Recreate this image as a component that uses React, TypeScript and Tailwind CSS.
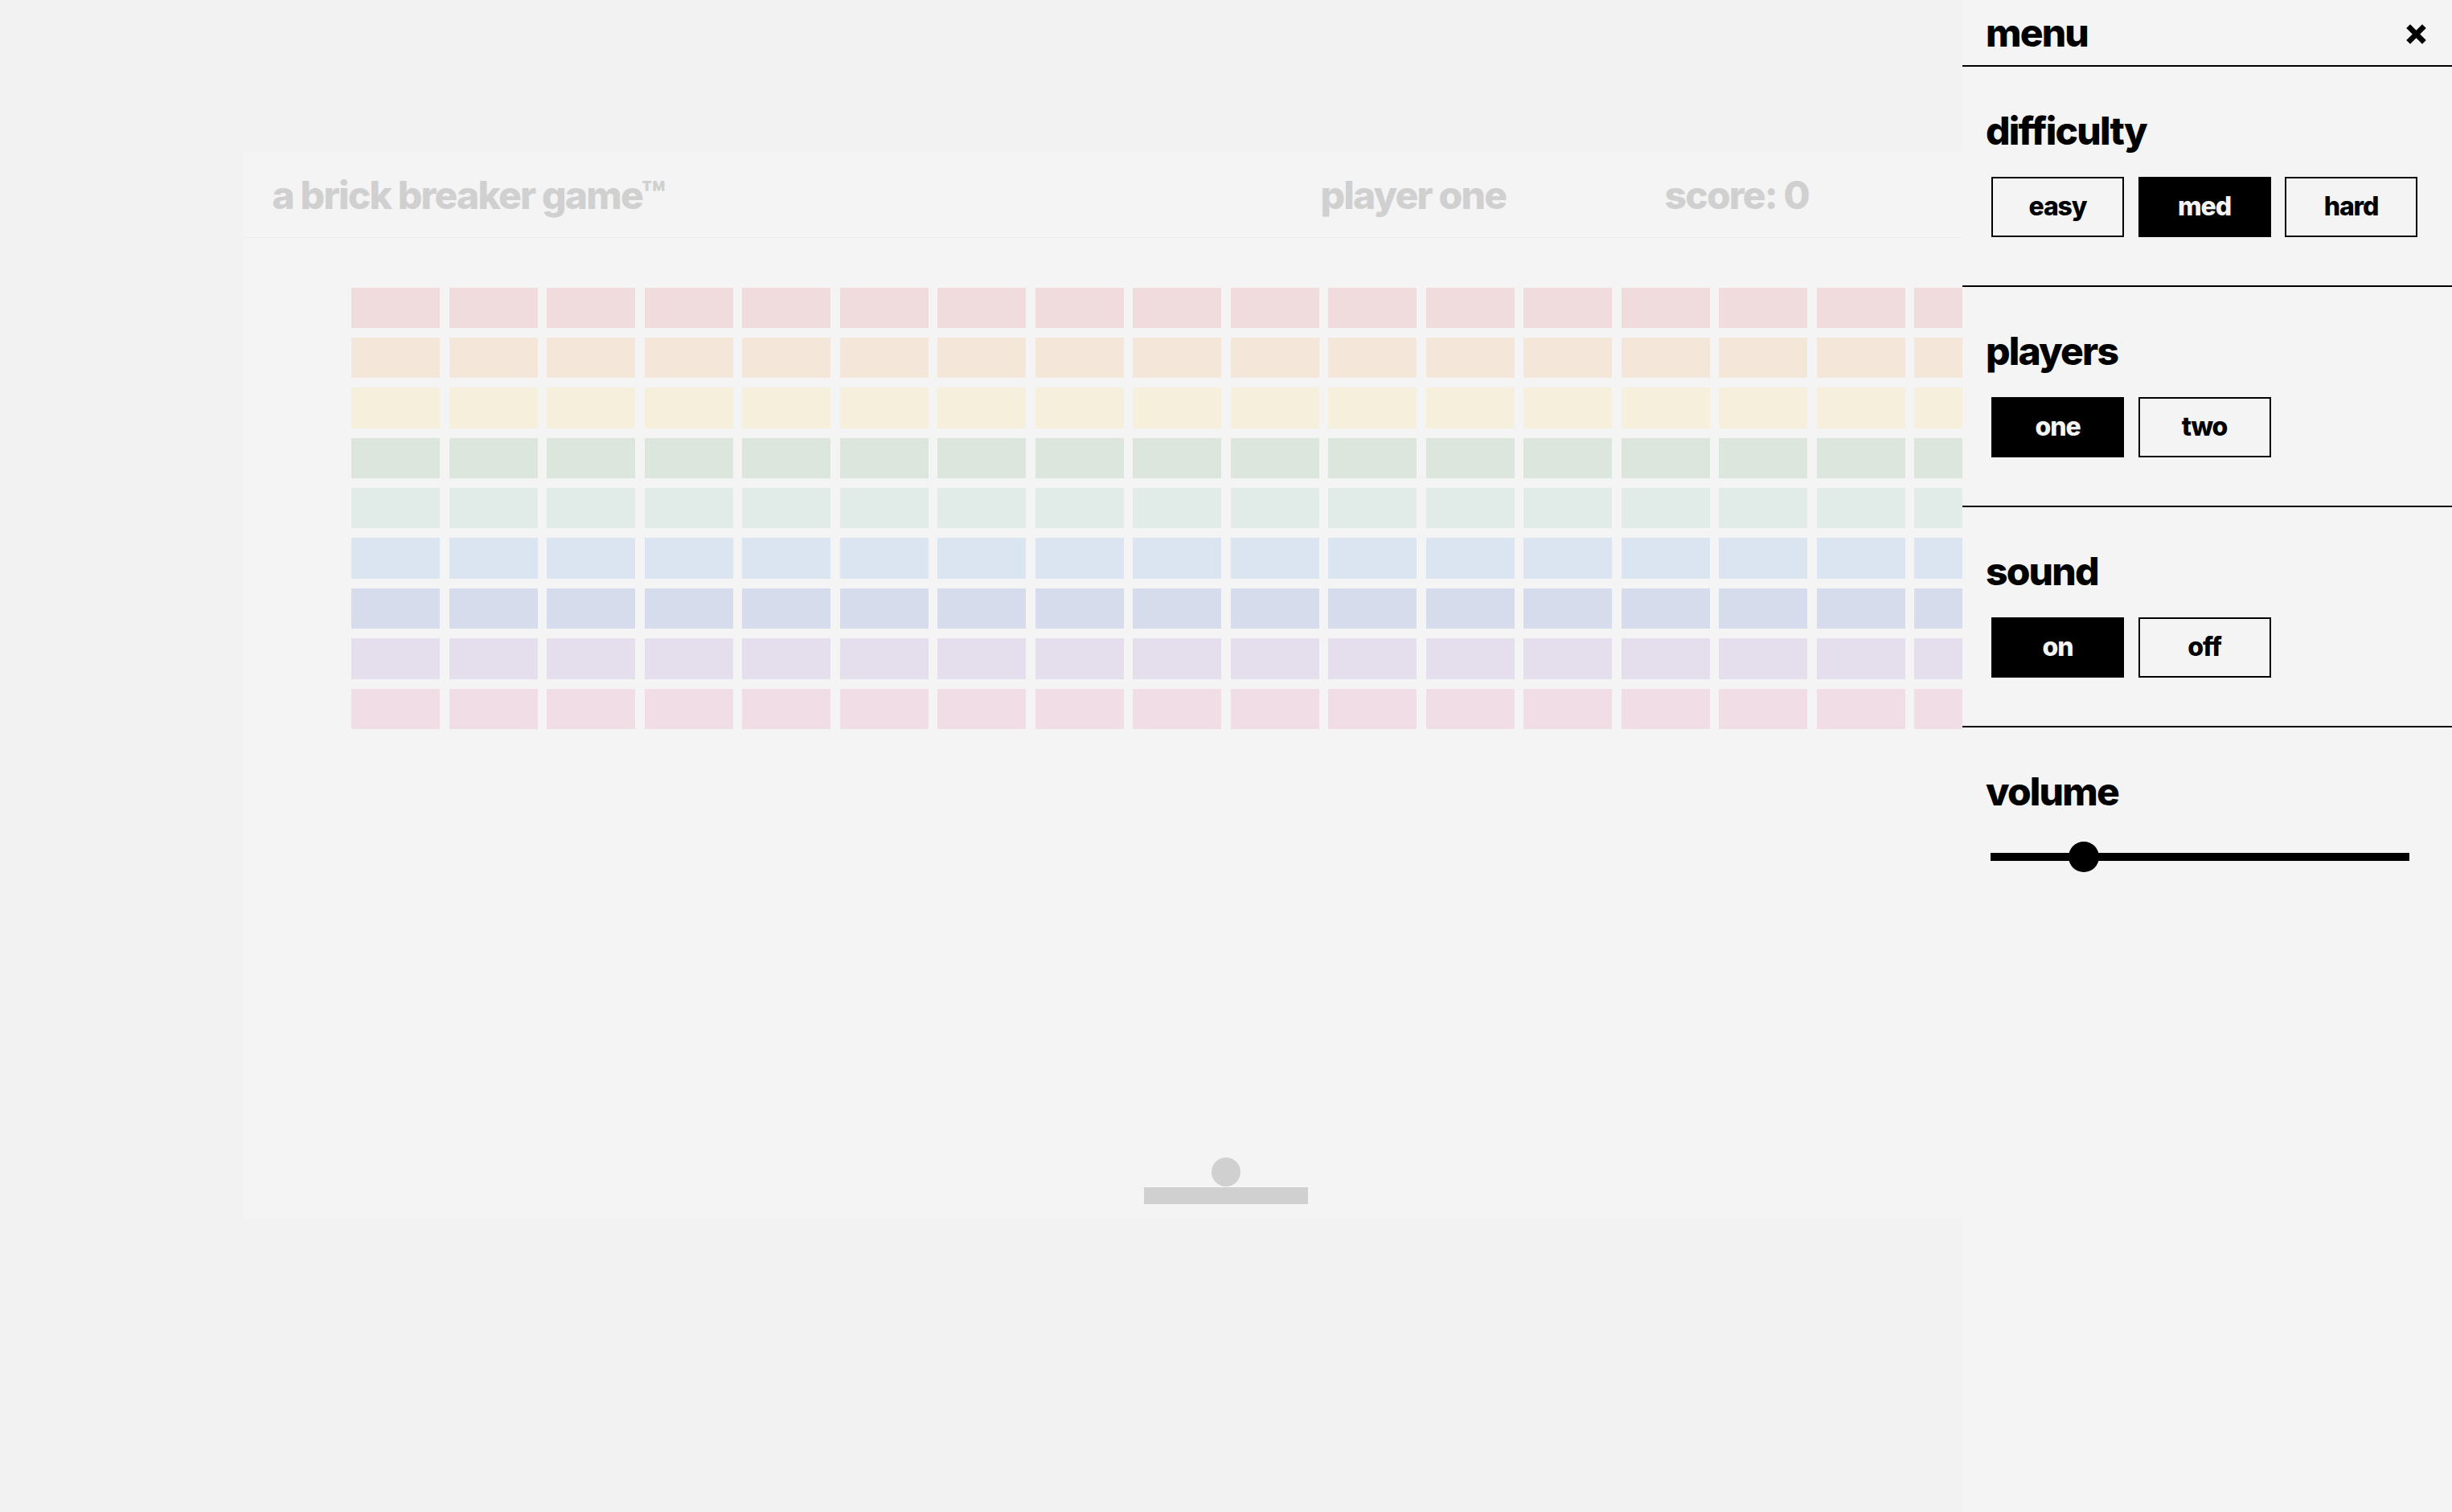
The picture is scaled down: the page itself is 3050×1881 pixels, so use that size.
import { useState } from "react"

const brickRows = [
  "bg-[#f0dcdc]",
  "bg-[#f5e6da]",
  "bg-[#f6efdc]",
  "bg-[#dce6dc]",
  "bg-[#e1ebe7]",
  "bg-[#dae5f1]",
  "bg-[#d6dcec]",
  "bg-[#e5dfed]",
  "bg-[#f0dde5]",
]

const COLS = 18

function OptionGroup({
  options,
  value,
  onChange,
}: {
  options: string[]
  value: string
  onChange: (v: string) => void
}) {
  return (
    <div className="mt-[33px] ml-[7px] flex gap-[17.5px]">
      {options.map((opt) => (
        <button
          key={opt}
          onClick={() => onChange(opt)}
          className={
            opt === value
              ? "h-[75px] w-[165px] border-2 border-black bg-black text-[32px] font-extrabold tracking-[-0.035em] text-[#f4f4f4]"
              : "h-[75px] w-[165px] border-2 border-black bg-transparent text-[32px] font-extrabold tracking-[-0.035em] text-black"
          }
        >
          {opt}
        </button>
      ))}
    </div>
  )
}

function Section({ title, children }: { title: string; children: React.ReactNode }) {
  return (
    <section className="h-[274px] border-b-2 border-black px-[29px] pt-[55.5px]">
      <h2 className="text-[48px] leading-[48px] font-extrabold tracking-[-0.038em] text-black">{title}</h2>
      {children}
    </section>
  )
}

export default function App() {
  const [difficulty, setDifficulty] = useState("med")
  const [players, setPlayers] = useState("one")
  const [sound, setSound] = useState("on")

  return (
    <div className="relative h-screen w-full overflow-hidden bg-[#f2f2f2] font-['Inter',sans-serif]">
      {/* Game board (dimmed while menu is open) */}
      <div className="mx-auto mt-[190px] flex h-[1327px] w-[2445px] flex-col bg-[#f4f4f4]">
        <header className="flex h-[106px] shrink-0 items-center border-b border-[#ececec] px-[36px] text-[48px] leading-[48px] font-extrabold tracking-[-0.038em] text-[#d0d0d0]">
          <div className="flex-1">a brick breaker game™</div>
          <div className="flex w-[1069px]">
            <div className="w-[428px]">player one</div>
            <div>score: 0</div>
          </div>
        </header>

        <div className="flex flex-1 flex-col items-center pt-[61.5px] pb-[19px]">
          <div className="grid grid-cols-[repeat(18,110px)] auto-rows-[50.4px] gap-x-[11.5px] gap-y-[12px]">
            {brickRows.map((color, r) =>
              Array.from({ length: COLS }).map((_, c) => <div key={`${r}-${c}`} className={color} />)
            )}
          </div>

          <div className="mt-auto flex flex-col items-center">
            <div className="h-[36px] w-[36px] rounded-full bg-[#d0d0d0]" />
            <div className="mt-[1.5px] h-[20.6px] w-[204px] bg-[#d0d0d0]" />
          </div>
        </div>
      </div>

      {/* Menu panel */}
      <aside className="absolute top-0 right-0 h-full w-[609px] bg-[#f4f4f4]">
        <div className="flex h-[83px] items-center justify-between border-b-2 border-black pr-[31px] pl-[29px]">
          <h1 className="text-[48px] leading-[48px] font-extrabold tracking-[-0.038em] text-black">menu</h1>
          <button className="mt-[4px]" aria-label="close menu">
            <svg width="27" height="27" viewBox="0 0 26 26">
              <line x1="3.5" y1="3.5" x2="22.5" y2="22.5" stroke="black" strokeWidth="6.5" />
              <line x1="22.5" y1="3.5" x2="3.5" y2="22.5" stroke="black" strokeWidth="6.5" />
            </svg>
          </button>
        </div>

        <Section title="difficulty">
          <OptionGroup options={["easy", "med", "hard"]} value={difficulty} onChange={setDifficulty} />
        </Section>
        <Section title="players">
          <OptionGroup options={["one", "two"]} value={players} onChange={setPlayers} />
        </Section>
        <Section title="sound">
          <OptionGroup options={["on", "off"]} value={sound} onChange={setSound} />
        </Section>

        <section className="px-[29px] pt-[55.5px]">
          <h2 className="text-[48px] leading-[48px] font-extrabold tracking-[-0.038em] text-black">volume</h2>
          <div className="relative mt-[38px] ml-[6px] h-[38px] w-[521px]">
            <div className="absolute top-[14px] left-0 h-[10px] w-full bg-black" />
            <div className="absolute top-0 left-[97px] h-[38px] w-[38px] rounded-full bg-black" />
          </div>
        </section>
      </aside>
    </div>
  )
}
